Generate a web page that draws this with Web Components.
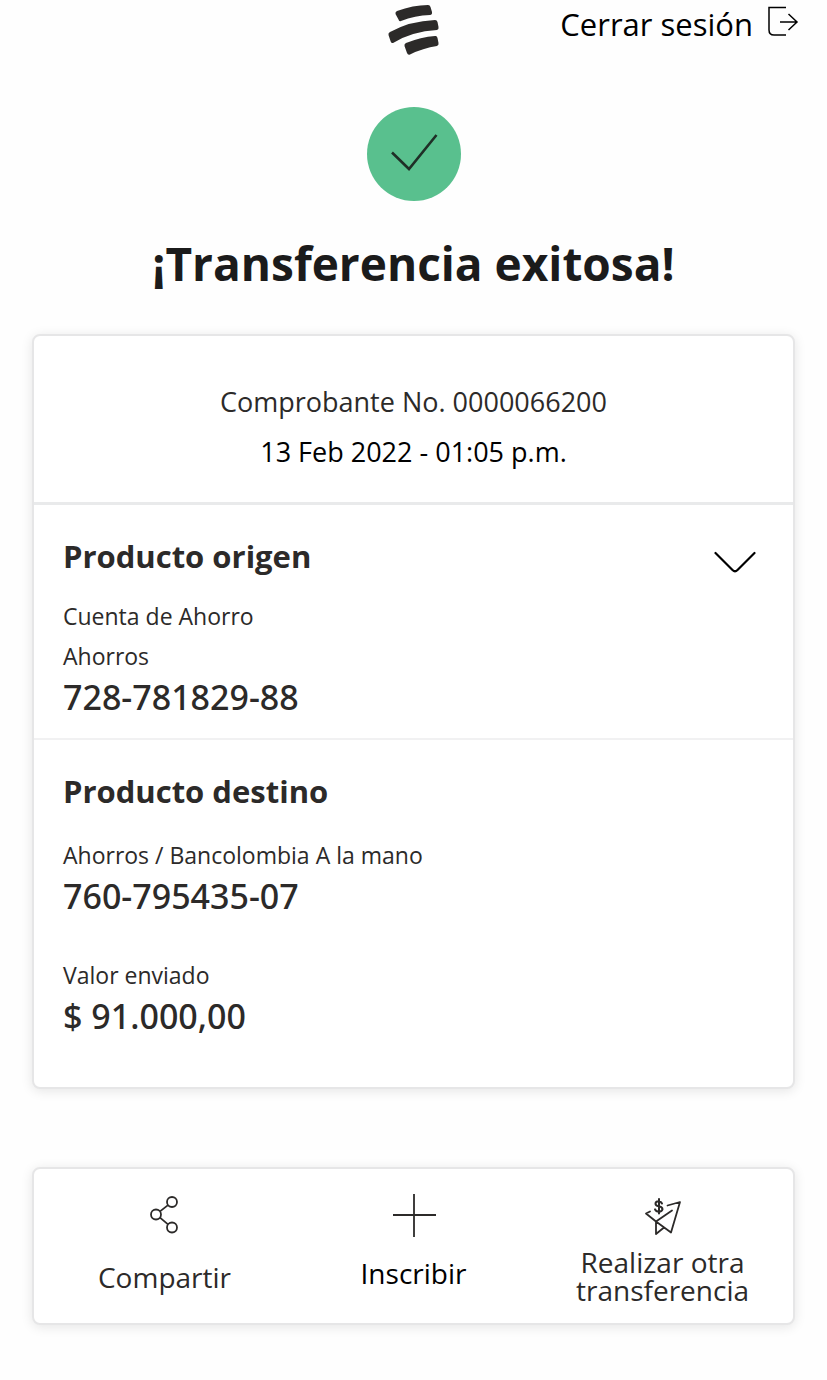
<!DOCTYPE html>
<html lang="es">
<head>
<meta charset="utf-8">
<meta name="viewport" content="width=device-width, initial-scale=1">
<title>Transferencia exitosa</title>
<style>
  html { background: #fefefe; }
  body { margin: 0; font-family: "Open Sans", "Noto Sans", sans-serif; color: #2c2a29; }
</style>
</head>
<body>
<transfer-page></transfer-page>

<script>
const define = (name, html) => {
  const template = document.createElement('template');
  template.innerHTML = html;
  customElements.define(name, class extends HTMLElement {
    constructor() {
      super();
      this.attachShadow({ mode: 'open' }).append(template.content.cloneNode(true));
    }
  });
};

define('brand-header', `
  <style>
    :host { display: grid; grid-template-columns: 1fr auto 1fr; height: 60px; }
    .logo { grid-column: 2; display: block; }
    a { justify-self: end; align-self: start; display: flex; gap: 10px; padding: 2px 28px 0 0;
        color: #000; font-size: 31px; line-height: 44px; text-decoration: none; white-space: nowrap; }
    a svg { margin-top: 2px; }
  </style>
  <svg class="logo" width="52" height="60" viewBox="0 0 52 60" fill="#2c2a29" role="img" aria-label="Bancolombia">
    <path d="M9 11Q25 5 40 5Q42 5 42.500 7L44 12Q44.500 14.500 42 15Q27 15.500 13 21Q11 22 10.500 19.500L7.500 14Q7 12 9 11Z"/>
    <path d="M2 32Q22 21 47 20Q49 20 49.500 22L50.500 27Q51 29.500 49 30Q24 31.500 6 42.500Q3 44 2.500 41L0.500 35Q0 33 2 32Z"/>
    <path d="M18 43Q33 37 47 36Q49 35.500 49.500 38L50.500 43Q51 45 49 46Q35 48 22 54.500Q20 55.500 19 53L16.500 46Q16 44 18 43Z"/>
  </svg>
  <a href="#salir">Cerrar sesión
    <svg width="36" height="36" viewBox="0 0 36 36" fill="none" stroke="#000" stroke-width="1.500" aria-hidden="true">
      <path d="M23 3.500H6V26Q6 31 11 31H23M17 18H34M25.500 10L34 18L25.500 26"/>
    </svg>
  </a>`);

define('success-banner', `
  <style>
    :host { display: flex; flex-direction: column; align-items: center; padding-top: 47px; }
    h1 { margin: 30px 0 0; font-size: 46px; line-height: 64px; font-weight: 700; color: #1b1b1b; text-align: center; }
  </style>
  <svg width="94" height="94" viewBox="0 0 94 94" aria-hidden="true">
    <circle cx="47" cy="47" r="47" fill="#59c08e"/>
    <path d="M25 45.500L42 62L69.500 28" fill="none" stroke="#1f2f27" stroke-width="2.600"/>
  </svg>
  <h1><slot></slot></h1>`);

define('surface-card', `
  <style>
    :host { display: block; background: #fff; border: 2px solid #e6e6e7; border-radius: 8px;
            box-shadow: 0 2px 12px rgba(0, 0, 0, .1); }
  </style>
  <slot></slot>`);

define('receipt-summary', `
  <style>
    :host { display: block; padding: 41px 29px 25px; border-bottom: 3px solid #e9eaeb;
            text-align: center; font-size: 27px; line-height: 50px; }
    ::slotted(*) { display: block; }
    ::slotted(time) { color: #000; }
  </style>
  <slot></slot>`);

define('product-section', `
  <style>
    :host { display: block; padding: 29px 29px 24px; }
    :host([divided]) { border-bottom: 2px solid #f1f1f2; padding-bottom: 20px; }
    header { display: flex; justify-content: space-between; align-items: flex-start; }
    h2 { margin: 0; font-size: 31px; line-height: 44px; font-weight: 700; }
    ::slotted(button) { appearance: none; border: 0; background: none; padding: 0; margin: 16px 7px 0 0; height: 24px; color: #000; }
  </style>
  <header><h2><slot name="title"></slot></h2><slot name="action"></slot></header>
  <slot></slot>`);

define('chevron-icon', `
  <style>:host, svg { display: block; }</style>
  <svg width="44" height="24" viewBox="0 0 44 24" fill="none" stroke="currentColor" stroke-width="2.200" stroke-linecap="round" aria-hidden="true">
    <path d="M2.500 3L19.500 20Q22 22.500 24.500 20L41.500 3"/>
  </svg>`);

define('data-field', `
  <style>
    :host { display: block; margin-top: 18px; }
    :host([spaced]) { margin-top: 38px; }
    :host([first]) { margin-top: 22px; }
    .label { font-size: 23px; line-height: 40px; }
    .value { font-family: "Noto Sans", "Open Sans", sans-serif; font-size: 34px; line-height: 42px; font-weight: 500; }
    ::slotted([slot=label]) { display: block; }
  </style>
  <div class="label"><slot name="label"></slot></div>
  <div class="value"><slot></slot></div>`);

define('action-bar', `
  <style>
    :host { display: grid; grid-template-columns: repeat(3, 1fr); padding: 24px 6px 19px; }
  </style>
  <slot></slot>`);

define('action-button', `
  <style>
    :host { display: flex; justify-content: center; }
    button { appearance: none; border: 0; background: none; padding: 0; display: flex; flex-direction: column;
             align-items: center; font: inherit; font-size: 28px; line-height: 28px; color: inherit; }
    .icon { height: 44px; display: flex; align-items: center; }
    .label { margin-top: 11px; }
    :host([tone=primary]) { color: #000; }
    :host([tone=primary]) .label { margin-top: 22px; }
    :host([tone=share]) .label { margin-top: 26px; }
  </style>
  <button type="button"><span class="icon"><slot name="icon"></slot></span><span class="label"><slot></slot></span></button>`);

define('transfer-page', `
  <style>
    :host { display: block; padding-bottom: 54px; }
    main { padding: 0 32px; }
    surface-card { margin-top: 39px; }
    surface-card.actions { margin-top: 78px; }
    .receipt { padding-bottom: 26px; }
    svg { display: block; }
  </style>
  <brand-header></brand-header>
  <main>
    <success-banner>¡Transferencia exitosa!</success-banner>
    <surface-card class="receipt">
      <receipt-summary>
        <span>Comprobante No. 0000066200</span>
        <time datetime="2022-02-13T13:05">13 Feb 2022 - 01:05 p.m.</time>
      </receipt-summary>
      <product-section divided>
        <span slot="title">Producto origen</span>
        <button slot="action" type="button" aria-label="Ver detalle"><chevron-icon></chevron-icon></button>
        <data-field>
          <span slot="label">Cuenta de Ahorro</span>
          <span slot="label">Ahorros</span>
          728-781829-88
        </data-field>
      </product-section>
      <product-section>
        <span slot="title">Producto destino</span>
        <data-field first>
          <span slot="label">Ahorros / Bancolombia A la mano</span>
          760-795435-07
        </data-field>
        <data-field spaced>
          <span slot="label">Valor enviado</span>
          $ 91.000,00
        </data-field>
      </product-section>
    </surface-card>
    <surface-card class="actions">
      <action-bar>
        <action-button tone="share">
          <svg slot="icon" width="30" height="40" viewBox="0 0 30 40" fill="none" stroke="#2c2a29" stroke-width="1.800" aria-hidden="true">
            <circle cx="22" cy="7" r="5"/><circle cx="6" cy="19.500" r="5"/><circle cx="22" cy="32.500" r="5"/>
            <path d="M10 16.400L18 10.100M10 22.600L18 29.400"/>
          </svg>
          Compartir
        </action-button>
        <action-button tone="primary">
          <svg slot="icon" width="44" height="44" viewBox="0 0 44 44" fill="none" stroke="#2c2a29" stroke-width="1.800" aria-hidden="true">
            <path d="M22 1V44M1 22H44"/>
          </svg>
          Inscribir
        </action-button>
        <action-button>
          <svg slot="icon" width="38" height="40" viewBox="0 -2 38 40" fill="none" stroke="#2c2a29" stroke-width="1.800" stroke-linejoin="round" stroke-linecap="round" aria-hidden="true">
            <path d="M6 14.500L2 16.500L12 24.500L27 35.500L36 5L23.500 8.500M12 24.500L28 13.500M12 24.500V37L20 30.500"/>
            <path d="M18 6.500Q17 4.300 14.500 4.300Q11.500 4.500 11.500 6.800Q11.500 8.600 14.800 9.300Q18.500 10 18.500 12.300Q18 14.600 15 14.600Q12 14.600 11 12.300M15 2V16.500" stroke-width="2"/>
          </svg>
          Realizar otra<br>transferencia
        </action-button>
      </action-bar>
    </surface-card>
  </main>`);
</script>
</body>
</html>
